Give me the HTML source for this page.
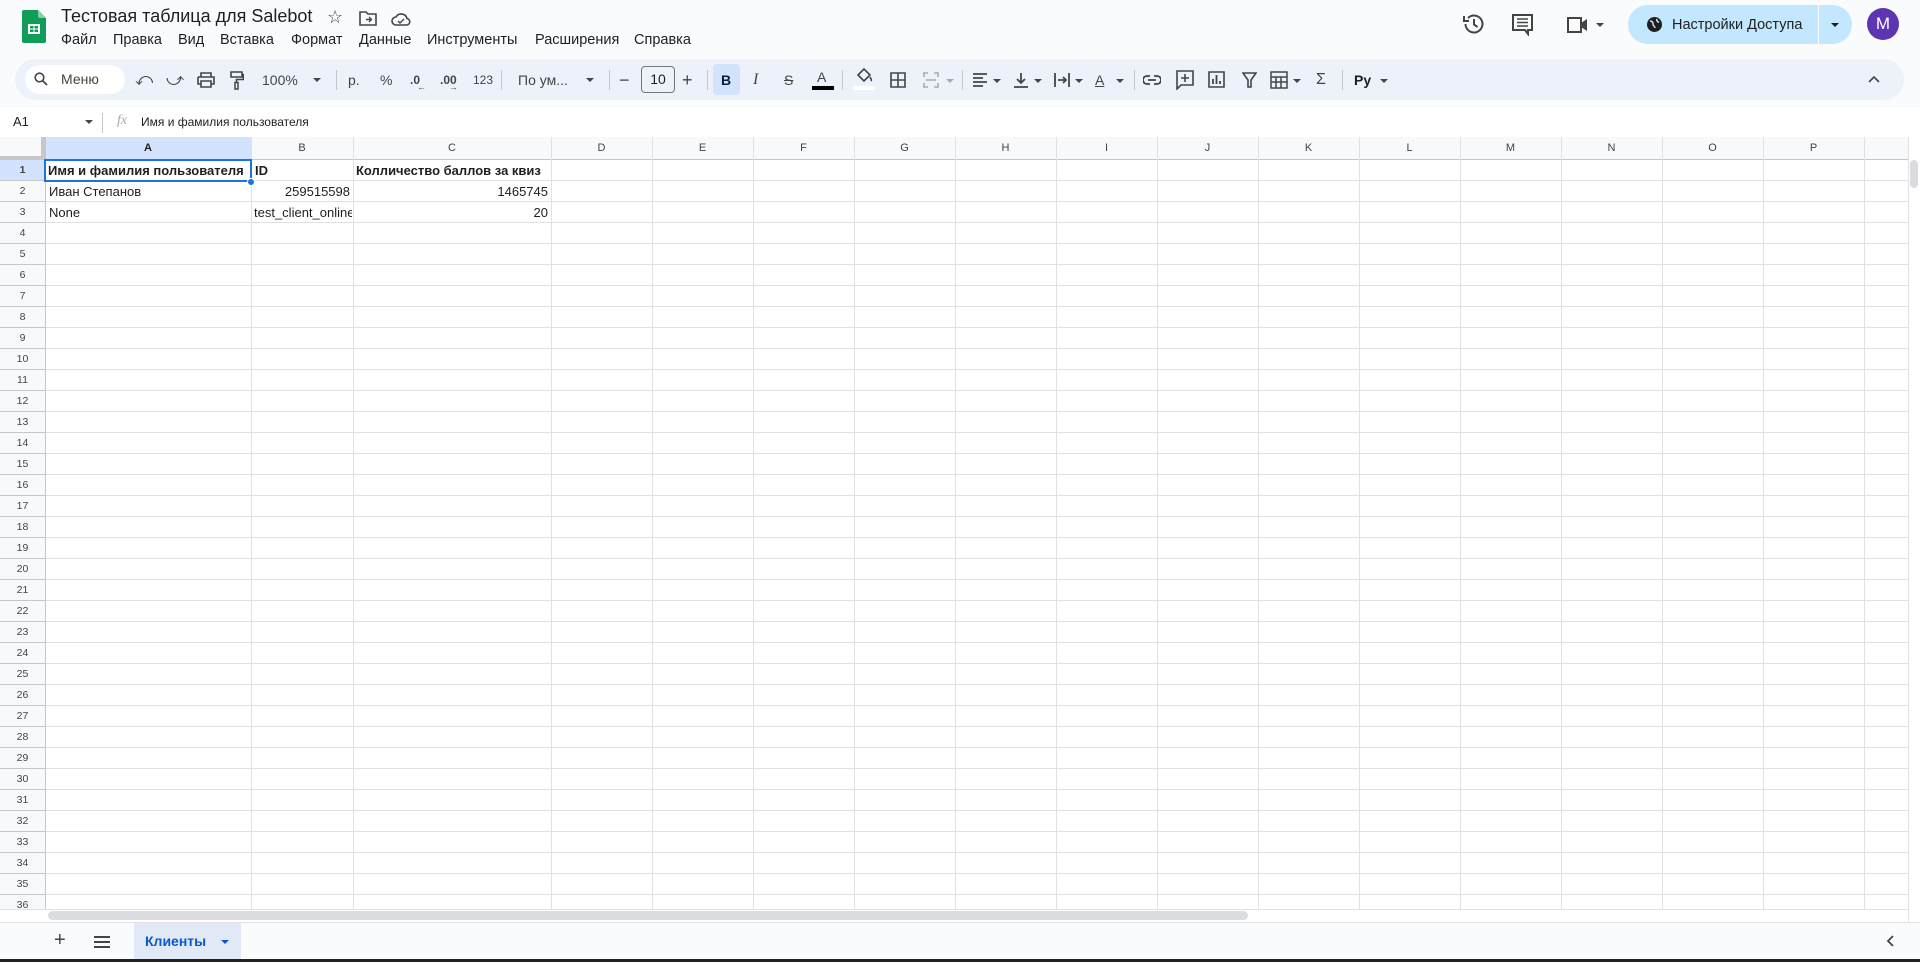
<!DOCTYPE html>
<html><head><meta charset="utf-8">
<style>
*{box-sizing:border-box;margin:0;padding:0}
body{width:1920px;height:962px;overflow:hidden;background:#f9fbfd;font-family:"Liberation Sans",Arial,sans-serif;position:relative;color:#1f1f1f}
.a{position:absolute}
.t{position:absolute;white-space:nowrap}
.m{position:absolute;top:32px;font-size:14.5px;color:#1f1f1f;white-space:nowrap}
.tb{position:absolute;top:69px;font-size:14px;color:#444;line-height:22px}
.sep{position:absolute;top:70px;width:1px;height:20px;background:#c7c7c7}
.car{position:absolute;width:0;height:0;border-left:4px solid transparent;border-right:4px solid transparent;border-top:4px solid #444}
.grid{position:absolute;left:0;top:137px;width:1908px;height:772px;background:#fff;overflow:hidden}
.vl{position:absolute;top:0;width:1px;height:772px;background:#e1e1e1}
.ch{position:absolute;top:0;height:23px;font-size:11px;color:#444;text-align:center;line-height:23px}
.rh{position:absolute;left:0;width:45px;font-size:10.5px;color:#444;text-align:center;line-height:21px}
.c{position:absolute;font-size:13px;line-height:21px;white-space:nowrap;overflow:hidden}
</style></head><body>
<!-- logo -->
<svg class="a" style="left:22px;top:10px" width="24" height="33" viewBox="0 0 24 33">
<path d="M2 0h14l8 8v23a2 2 0 0 1-2 2H2a2 2 0 0 1-2-2V2a2 2 0 0 1 2-2z" fill="#0f9d58"/>
<path d="M16 0v6a2 2 0 0 0 2 2h6z" fill="#87ceac"/>
<rect x="6" y="14" width="12" height="10" fill="#fff"/>
<rect x="8" y="16" width="3.5" height="2.5" fill="#0f9d58"/><rect x="12.5" y="16" width="3.5" height="2.5" fill="#0f9d58"/>
<rect x="8" y="19.5" width="3.5" height="2.5" fill="#0f9d58"/><rect x="12.5" y="19.5" width="3.5" height="2.5" fill="#0f9d58"/>
</svg>
<div class="t" style="left:61px;top:6px;font-size:18px;color:#1f1f1f">Тестовая таблица для Salebot</div>
<div class="t" style="left:327px;top:7px;font-size:18px;color:#444">☆</div>
<svg class="a" style="left:359px;top:11px" width="18" height="15" viewBox="0 0 18 15"><path d="M1 1h6l2 2h8v11H1z" fill="none" stroke="#444" stroke-width="1.6"/><path d="M7 8.5h5M10 6l2.5 2.5L10 11" fill="none" stroke="#444" stroke-width="1.4"/></svg>
<svg class="a" style="left:391px;top:11px" width="20" height="15" viewBox="0 0 20 15"><path d="M5 14a4 4 0 0 1 0-8 6 6 0 0 1 11 1.5A3.3 3.3 0 0 1 16 14z" fill="none" stroke="#444" stroke-width="1.6"/><path d="M7 10l2 2 4-4" fill="none" stroke="#444" stroke-width="1.4"/></svg>
<div class="m" style="left:61px">Файл</div>
<div class="m" style="left:113px">Правка</div>
<div class="m" style="left:178px">Вид</div>
<div class="m" style="left:220px">Вставка</div>
<div class="m" style="left:291px">Формат</div>
<div class="m" style="left:359px">Данные</div>
<div class="m" style="left:427px">Инструменты</div>
<div class="m" style="left:535px">Расширения</div>
<div class="m" style="left:634px">Справка</div>

<!-- right header -->
<svg class="a" style="left:1461px;top:13px" width="24" height="22" viewBox="0 0 24 22"><path d="M4.5 11a8.5 8.5 0 1 0 2.5-6" fill="none" stroke="#444" stroke-width="2"/><path d="M3 3v5h5" fill="none" stroke="#444" stroke-width="2"/><path d="M13 6v5.5l3.5 2.5" fill="none" stroke="#444" stroke-width="2"/></svg>
<svg class="a" style="left:1512px;top:14px" width="21" height="22" viewBox="0 0 21 22"><path d="M1 1h19v15h-4v4l-3-4H1z" fill="none" stroke="#444" stroke-width="2"/><path d="M5 5h11M5 8.5h11M5 12h11" stroke="#444" stroke-width="1.6"/></svg>
<svg class="a" style="left:1566px;top:16px" width="24" height="18" viewBox="0 0 24 18"><path d="M2 2h13v14H2z" fill="none" stroke="#444" stroke-width="2"/><path d="M15 7l6-4v12l-6-4z" fill="#444"/></svg>
<div class="car" style="left:1596px;top:23px"></div>
<div class="a" style="left:1628px;top:5px;width:224px;height:39px;border-radius:20px;background:#c2e7ff"></div>
<div class="a" style="left:1818px;top:5px;width:1px;height:39px;background:#f9fbfd"></div>
<svg class="a" style="left:1646px;top:16px" width="17" height="17" viewBox="0 0 17 17"><circle cx="8.5" cy="8.5" r="7.5" fill="#1f1f1f"/><path d="M4 5c2 0 3 1 3 3s2 2 2 4M11 3c-1 2 1 3 2 3.5" stroke="#c2e7ff" stroke-width="1.5" fill="none"/></svg>
<div class="t" style="left:1672px;top:17px;font-size:14.5px;color:#1f1f1f">Настройки Доступа</div>
<div class="car" style="left:1831px;top:23px;border-top-color:#1f1f1f"></div>
<div class="a" style="left:1867px;top:8px;width:32px;height:32px;border-radius:50%;background:#5e35b1;color:#fff;font-size:17px;text-align:center;line-height:32px">M</div>

<!-- toolbar -->
<div class="a" style="left:15px;top:59px;width:1889px;height:41px;border-radius:21px;background:#edf2fa"></div>
<div class="a" style="left:25px;top:65px;width:100px;height:29px;border-radius:15px;background:#fff"></div>
<svg class="a" style="left:34px;top:72px" width="14" height="14" viewBox="0 0 14 14"><circle cx="5.5" cy="5.5" r="4.3" fill="none" stroke="#444" stroke-width="1.6"/><path d="M8.7 8.7L13 13" stroke="#444" stroke-width="1.8"/></svg>
<div class="tb" style="left:61px;top:68px">Меню</div>
<div class="tb" style="left:135px;font-size:17px">⤺</div>
<div class="tb" style="left:166px;font-size:17px">⤻</div>
<svg class="a" style="left:197px;top:72px" width="18" height="16" viewBox="0 0 18 16"><path d="M4 5V1h10v4M1 5h16v7h-3M4 12H1V5" fill="none" stroke="#444" stroke-width="1.6"/><path d="M4 9h10v6H4z" fill="none" stroke="#444" stroke-width="1.6"/></svg>
<svg class="a" style="left:230px;top:71px" width="14" height="19" viewBox="0 0 14 19"><path d="M1 1h11v5H1zM12 3.5h1.5v5H6.5v3" fill="none" stroke="#444" stroke-width="1.6"/><rect x="5" y="11.5" width="3" height="6.5" fill="none" stroke="#444" stroke-width="1.5"/></svg>
<div class="tb" style="left:262px">100%</div><div class="car" style="left:313px;top:78px"></div>
<div class="sep" style="left:336px"></div>
<div class="tb" style="left:348px">р.</div>
<div class="tb" style="left:380px">%</div>
<div class="tb" style="left:410px;font-size:12px;font-weight:bold">.0<span style="font-size:9px;position:relative;top:6px;left:-3px">←</span></div>
<div class="tb" style="left:440px;font-size:12px;font-weight:bold">.00<span style="font-size:9px;position:relative;top:6px;left:-8px">→</span></div>
<div class="tb" style="left:473px;font-size:12px">123</div>
<div class="sep" style="left:501px"></div>
<div class="tb" style="left:518px">По ум...</div><div class="car" style="left:586px;top:78px"></div>
<div class="sep" style="left:609px"></div>
<div class="tb" style="left:619px;font-size:18px">−</div>
<div class="a" style="left:641px;top:66px;width:34px;height:27px;border:1px solid #747775;border-radius:4px;font-size:14px;text-align:center;line-height:25px;color:#1f1f1f">10</div>
<div class="tb" style="left:682px;font-size:18px">+</div>
<div class="sep" style="left:707px"></div>
<div class="a" style="left:713px;top:64px;width:27px;height:31px;border-radius:4px;background:#d3e3fd"></div>
<div class="tb" style="left:721px;font-weight:bold;color:#041e49">B</div>
<div class="tb" style="left:753px;font-style:italic;font-family:'Liberation Serif',serif;font-size:16px">I</div>
<div class="tb" style="left:784px;text-decoration:line-through">S</div>
<div class="tb" style="left:817px;top:66px">A</div><div class="a" style="left:812px;top:86px;width:22px;height:4px;background:#000"></div>
<div class="sep" style="left:842px"></div>
<svg class="a" style="left:855px;top:67px" width="18" height="16" viewBox="0 0 18 16"><path d="M3 8l6-6 6 6-6 6z" fill="none" stroke="#444" stroke-width="1.6"/><path d="M15 10c1 2 2 3 1 4" stroke="#444" stroke-width="1.6" fill="#444"/></svg>
<div class="a" style="left:853px;top:86px;width:22px;height:4px;background:#fff"></div>
<svg class="a" style="left:890px;top:72px" width="16" height="16" viewBox="0 0 16 16"><path d="M1 1h14v14H1zM8 1v14M1 8h14" fill="none" stroke="#444" stroke-width="1.6"/></svg>
<svg class="a" style="left:923px;top:72px" width="16" height="16" viewBox="0 0 16 16"><path d="M1 5V1h4M11 1h4v4M15 11v4h-4M5 15H1v-4M3 8h10" fill="none" stroke="#aaa" stroke-width="1.6"/></svg>
<div class="car" style="left:946px;top:79px;border-top-color:#aaa"></div>
<div class="sep" style="left:962px"></div>
<svg class="a" style="left:972px;top:72px" width="16" height="16" viewBox="0 0 16 16"><path d="M1 2h14M1 6h10M1 10h14M1 14h10" stroke="#444" stroke-width="1.8"/></svg><div class="car" style="left:993px;top:79px"></div>
<svg class="a" style="left:1013px;top:72px" width="16" height="16" viewBox="0 0 16 16"><path d="M8 1v10M4 7l4 4 4-4M1 15h14" fill="none" stroke="#444" stroke-width="1.8"/></svg><div class="car" style="left:1034px;top:79px"></div>
<svg class="a" style="left:1054px;top:72px" width="16" height="16" viewBox="0 0 16 16"><path d="M1 1v14M15 1v14M4 8h7M9 5l3 3-3 3" fill="none" stroke="#444" stroke-width="1.8"/></svg><div class="car" style="left:1075px;top:79px"></div>
<div class="tb" style="left:1095px;text-decoration:underline">A</div><div class="car" style="left:1116px;top:79px"></div>
<div class="sep" style="left:1134px"></div>
<svg class="a" style="left:1143px;top:74px" width="18" height="12" viewBox="0 0 18 12"><path d="M7 2H4a4 4 0 0 0 0 8h3M11 2h3a4 4 0 0 1 0 8h-3M5 6h8" fill="none" stroke="#444" stroke-width="1.8"/></svg>
<svg class="a" style="left:1176px;top:70px" width="18" height="20" viewBox="0 0 18 20"><path d="M1 1h16v14H5l-4 4z" fill="none" stroke="#444" stroke-width="1.6"/><path d="M9 4v8M5 8h8" stroke="#444" stroke-width="1.6"/></svg>
<svg class="a" style="left:1208px;top:71px" width="17" height="17" viewBox="0 0 17 17"><path d="M1 1h15v15H1z" fill="none" stroke="#444" stroke-width="1.6"/><path d="M5 13V8M8.5 13V4M12 13v-3" stroke="#444" stroke-width="1.8"/></svg>
<svg class="a" style="left:1242px;top:72px" width="15" height="16" viewBox="0 0 15 16"><path d="M1 1h13L9 8v7H6V8z" fill="none" stroke="#444" stroke-width="1.6"/></svg>
<svg class="a" style="left:1270px;top:71px" width="18" height="18" viewBox="0 0 18 18"><path d="M1 1h16v16H1zM1 6h16M6 6v11M11 6v11M1 11h16" fill="none" stroke="#444" stroke-width="1.5"/></svg><div class="car" style="left:1293px;top:79px"></div>
<div class="tb" style="left:1316px;font-size:16px">Σ</div>
<div class="sep" style="left:1342px"></div>
<div class="tb" style="left:1354px;font-weight:bold;color:#1f1f1f">Pу</div><div class="car" style="left:1380px;top:79px"></div>
<svg class="a" style="left:1868px;top:75px" width="12" height="8" viewBox="0 0 12 8"><path d="M1 7l5-5 5 5" fill="none" stroke="#444" stroke-width="1.6"/></svg>

<!-- formula bar -->
<div class="a" style="left:0;top:108px;width:1920px;height:29px;background:#fff"></div>
<div class="t" style="left:13px;top:114px;font-size:13px;color:#1f1f1f">A1</div>
<div class="car" style="left:85px;top:120px"></div>
<div class="a" style="left:102px;top:113px;width:1px;height:20px;background:#c7c7c7"></div>
<div class="t" style="left:117px;top:113px;font-size:14px;font-style:italic;color:#aaa;font-family:'Liberation Serif',serif">fx</div>
<div class="t" style="left:141px;top:115px;font-size:12px;color:#1f1f1f">Имя и фамилия пользователя</div>

<!-- grid -->
<div class="grid">
 <div class="a" style="left:0;top:0;width:1908px;height:23px;background:#f8f9fa"></div>
 <div class="a" style="left:0;top:0;width:45px;height:772px;background:#f8f9fa"></div>
 <div class="a" style="left:0;top:0;width:45px;height:23px;background:#f8f9fa;border-right:4px solid #c7c7c7;border-bottom:4px solid #c7c7c7"></div>
 <div class="a" style="left:45px;top:0;width:206px;height:23px;background:#d3e3fd"></div>
 <div class="a" style="left:0;top:23px;width:45px;height:21px;background:#d3e3fd"></div>
 <div class="a" style="left:45px;top:23px;width:1863px;height:749px;background:repeating-linear-gradient(to bottom,transparent 0,transparent 20px,#e1e1e1 20px,#e1e1e1 21px)"></div>
 <div class="a" style="left:0;top:23px;width:45px;height:749px;background:repeating-linear-gradient(to bottom,transparent 0,transparent 20px,#c7c7c7 20px,#c7c7c7 21px)"></div>
 <div class="a" style="left:0;top:22px;width:1908px;height:1px;background:#c7c7c7"></div>
 <div class="vl" style="left:45px;background:#c7c7c7"></div>
 <div class="vl" style="left:251px"></div><div class="vl" style="left:353px"></div><div class="vl" style="left:551px"></div>
 <div class="vl" style="left:652px"></div><div class="vl" style="left:753px"></div><div class="vl" style="left:854px"></div>
 <div class="vl" style="left:955px"></div><div class="vl" style="left:1056px"></div><div class="vl" style="left:1157px"></div>
 <div class="vl" style="left:1258px"></div><div class="vl" style="left:1359px"></div><div class="vl" style="left:1460px"></div>
 <div class="vl" style="left:1561px"></div><div class="vl" style="left:1662px"></div><div class="vl" style="left:1763px"></div>
 <div class="vl" style="left:1864px"></div>
 <div class="ch" style="left:45px;width:206px;font-weight:bold;color:#1f1f1f">A</div>
 <div class="ch" style="left:251px;width:102px">B</div><div class="ch" style="left:353px;width:198px">C</div>
 <div class="ch" style="left:551px;width:101px">D</div><div class="ch" style="left:652px;width:101px">E</div>
 <div class="ch" style="left:753px;width:101px">F</div><div class="ch" style="left:854px;width:101px">G</div>
 <div class="ch" style="left:955px;width:101px">H</div><div class="ch" style="left:1056px;width:101px">I</div>
 <div class="ch" style="left:1157px;width:101px">J</div><div class="ch" style="left:1258px;width:101px">K</div>
 <div class="ch" style="left:1359px;width:101px">L</div><div class="ch" style="left:1460px;width:101px">M</div>
 <div class="ch" style="left:1561px;width:101px">N</div><div class="ch" style="left:1662px;width:101px">O</div>
 <div class="ch" style="left:1763px;width:101px">P</div>
 <div class="rh" style="top:23px;font-weight:bold">1</div><div class="rh" style="top:44px">2</div><div class="rh" style="top:65px">3</div>
 <div class="rh" style="top:86px">4</div><div class="rh" style="top:107px">5</div><div class="rh" style="top:128px">6</div>
 <div class="rh" style="top:149px">7</div><div class="rh" style="top:170px">8</div><div class="rh" style="top:191px">9</div>
 <div class="rh" style="top:212px">10</div><div class="rh" style="top:233px">11</div><div class="rh" style="top:254px">12</div>
 <div class="rh" style="top:275px">13</div><div class="rh" style="top:296px">14</div><div class="rh" style="top:317px">15</div>
 <div class="rh" style="top:338px">16</div><div class="rh" style="top:359px">17</div><div class="rh" style="top:380px">18</div>
 <div class="rh" style="top:401px">19</div><div class="rh" style="top:422px">20</div><div class="rh" style="top:443px">21</div>
 <div class="rh" style="top:464px">22</div><div class="rh" style="top:485px">23</div><div class="rh" style="top:506px">24</div>
 <div class="rh" style="top:527px">25</div><div class="rh" style="top:548px">26</div><div class="rh" style="top:569px">27</div>
 <div class="rh" style="top:590px">28</div><div class="rh" style="top:611px">29</div><div class="rh" style="top:632px">30</div>
 <div class="rh" style="top:653px">31</div><div class="rh" style="top:674px">32</div><div class="rh" style="top:695px">33</div>
 <div class="rh" style="top:716px">34</div><div class="rh" style="top:737px">35</div><div class="rh" style="top:758px">36</div>
 <div class="c" style="left:48px;top:23px;width:203px;font-weight:bold">Имя и фамилия пользователя</div>
 <div class="c" style="left:255px;top:23px;font-weight:bold">ID</div>
 <div class="c" style="left:356px;top:23px;width:195px;font-weight:bold">Колличество баллов за квиз</div>
 <div class="c" style="left:49px;top:44px">Иван Степанов</div>
 <div class="c" style="left:251px;top:44px;width:99px;text-align:right">259515598</div>
 <div class="c" style="left:353px;top:44px;width:195px;text-align:right">1465745</div>
 <div class="c" style="left:49px;top:65px">None</div>
 <div class="c" style="left:254px;top:65px;width:98px">test_client_online</div>
 <div class="c" style="left:353px;top:65px;width:195px;text-align:right">20</div>
 <div class="a" style="left:44px;top:22px;width:208px;height:23px;border:2px solid #1a73e8"></div>
 <div class="a" style="left:247px;top:41px;width:8px;height:8px;border-radius:50%;background:#1a73e8;border:1px solid #fff"></div>
</div>
<!-- v scrollbar -->
<div class="a" style="left:1908px;top:137px;width:12px;height:785px;background:#fff;border-left:1px solid #e1e1e1"></div>
<div class="a" style="left:1910px;top:160px;width:8px;height:28px;border-radius:4px;background:#dadce0"></div>
<!-- h scrollbar -->
<div class="a" style="left:0;top:909px;width:1908px;height:13px;background:#fff;border-top:1px solid #e1e1e1"></div>
<div class="a" style="left:48px;top:911px;width:1200px;height:9px;border-radius:5px;background:#dadce0"></div>
<!-- bottom bar -->
<div class="a" style="left:0;top:922px;width:1920px;height:37px;background:#f9fbfd;border-top:1px solid #e1e1e1"></div>
<div class="t" style="left:54px;top:929px;font-size:20px;color:#444">+</div>
<svg class="a" style="left:94px;top:936px" width="16" height="12" viewBox="0 0 16 12"><path d="M0 1h16M0 6h16M0 11h16" stroke="#444" stroke-width="2"/></svg>
<div class="a" style="left:134px;top:923px;width:107px;height:36px;background:#e1e9f7"></div>
<div class="t" style="left:145px;top:933px;font-size:14px;font-weight:bold;color:#0b57d0">Клиенты</div>
<div class="car" style="left:221px;top:940px;border-top-color:#0b57d0"></div>
<svg class="a" style="left:1886px;top:935px" width="8" height="12" viewBox="0 0 8 12"><path d="M7 1L2 6l5 5" fill="none" stroke="#444" stroke-width="1.8"/></svg>
<div class="a" style="left:0;top:959px;width:1920px;height:3px;background:#202124"></div>
</body></html>
